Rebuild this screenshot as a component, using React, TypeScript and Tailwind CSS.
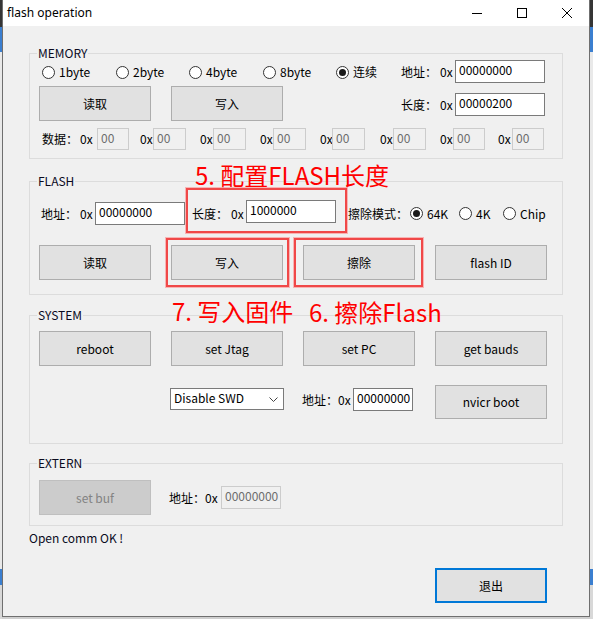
import React from "react";

type BtnProps = { children: React.ReactNode; className?: string; disabled?: boolean };
const Btn = ({ children, className = "", disabled = false }: BtnProps) => (
  <div
    className={`flex items-center justify-center border text-[12px] leading-[16px] ${
      disabled ? "bg-[#cccccc] border-[#bfbfbf] text-[#838383]" : "bg-[#e1e1e1] border-[#adadad] text-black"
    } ${className}`}
  >
    {children}
  </div>
);

type RadioProps = { label: string; checked?: boolean; className?: string };
const Radio = ({ label, checked = false, className = "" }: RadioProps) => (
  <div className={`flex items-center ${className}`}>
    <span className="w-[13px] h-[13px] rounded-full border border-[#333333] bg-white flex items-center justify-center shrink-0">
      {checked && <span className="w-[7px] h-[7px] rounded-full bg-[#1a1a1a]" />}
    </span>
    <span className="ml-[4px] leading-[16px]">{label}</span>
  </div>
);

type BoxProps = { children: React.ReactNode; className?: string };
const Input = ({ children, className = "" }: BoxProps) => (
  <div className={`flex items-center pl-[3px] pb-[3px] border border-[#7a7a7a] bg-white text-black leading-[16px] ${className}`}>
    {children}
  </div>
);
const DisInput = ({ children, className = "" }: BoxProps) => (
  <div className={`flex items-center pl-[3px] pb-[3px] border border-[#cccccc] bg-[#f0f0f0] text-[#6d6d6d] leading-[16px] ${className}`}>
    {children}
  </div>
);

type GroupProps = { title: string; className?: string; children: React.ReactNode };
const Group = ({ title, className = "", children }: GroupProps) => (
  <div className={`relative ml-[26px] w-[534px] border border-[#dcdcdc] shrink-0 ${className}`}>
    <span className="absolute left-[7px] top-[-9px] h-[16px] leading-[16px] px-[1px] bg-[#f0f0f0] text-[12px] text-[#0a0a1e]">
      {title}
    </span>
    {children}
  </div>
);

const dataCells = [
  { ml: "ml-0", lw: "w-[17px]", iw: "w-[32px]" },
  { ml: "ml-[11px]", lw: "w-[13px]", iw: "w-[33px]" },
  { ml: "ml-[14px]", lw: "w-[13px]", iw: "w-[33px]" },
  { ml: "ml-[14px]", lw: "w-[13px]", iw: "w-[33px]" },
  { ml: "ml-[14px]", lw: "w-[12px]", iw: "w-[33px]" },
  { ml: "ml-[15px]", lw: "w-[13px]", iw: "w-[33px]" },
  { ml: "ml-[14px]", lw: "w-[13px]", iw: "w-[32px]" },
  { ml: "ml-[13px]", lw: "w-[14px]", iw: "w-[32px]" },
];

const Strip = ({ className = "" }: { className?: string }) => (
  <div className={`flex flex-col h-[619px] shrink-0 ${className}`}>
    <div className="h-[27px] bg-[#353535]" />
    <div className="h-[25px] bg-[#3b7fd0]" />
    <div className="flex-1 bg-[#e9e9e9]" />
    <div className="h-[16px] bg-[#3b7fd0]" />
    <div className="h-[34px] bg-[#d8d8d8]" />
  </div>
);

export default function App() {
  return (
    <div className="w-[593px] h-[619px] flex bg-[#cfcfcf] overflow-hidden font-['Noto_Sans_CJK_SC',sans-serif] text-[12px] text-black">
      <Strip className="w-[2px]" />
      <div className="relative w-[588px] h-[617px] shrink-0 flex flex-col border-x border-b border-[#6f6f6f] bg-[#f0f0f0]">
        {/* title bar */}
        <div className="h-[26px] bg-white flex items-center shrink-0">
          <span className="ml-[4px] font-['Noto_Sans',sans-serif] text-[12px] leading-[16px] text-black">flash operation</span>
          <div className="ml-auto flex h-full">
            <div className="w-[45px] h-full flex items-center justify-center">
              <svg width="10" height="10" viewBox="0 0 10 10">
                <line x1="0" y1="5.5" x2="10" y2="5.5" stroke="#000" strokeWidth="1" />
              </svg>
            </div>
            <div className="w-[45px] h-full flex items-center justify-center">
              <svg width="10" height="10" viewBox="0 0 10 10">
                <rect x="0.5" y="0.5" width="9" height="9" fill="none" stroke="#000" strokeWidth="1" />
              </svg>
            </div>
            <div className="w-[45px] h-full flex items-center justify-center">
              <svg width="10" height="10" viewBox="0 0 10 10">
                <line x1="0" y1="0" x2="10" y2="10" stroke="#000" strokeWidth="1" />
                <line x1="10" y1="0" x2="0" y2="10" stroke="#000" strokeWidth="1" />
              </svg>
            </div>
          </div>
        </div>

        {/* MEMORY */}
        <Group title="MEMORY" className="mt-[27px] h-[106px]">
          <div className="flex">
            <div className="w-[371px]">
              <div className="mt-[6px] h-[24px] flex items-center pl-[12px]">
                <Radio label="1byte" className="w-[74px]" />
                <Radio label="2byte" className="w-[73px]" />
                <Radio label="4byte" className="w-[74px]" />
                <Radio label="8byte" className="w-[73px]" />
                <Radio label="连续" checked />
              </div>
              <div className="mt-[2px] flex pl-[9px] gap-[20px]">
                <Btn className="w-[112px] h-[35px]">读取</Btn>
                <Btn className="w-[112px] h-[35px]">写入</Btn>
              </div>
            </div>
            <div>
              <div className="mt-[6px] h-[23px] flex items-center">
                <span className="w-[39px]">地址：</span>
                <span className="w-[15px]">0x</span>
                <Input className="w-[90px] h-[23px]">00000000</Input>
              </div>
              <div className="mt-[10px] h-[23px] flex items-center">
                <span className="w-[39px]">长度：</span>
                <span className="w-[15px]">0x</span>
                <Input className="w-[90px] h-[23px]">00000200</Input>
              </div>
            </div>
          </div>
          <div className="mt-[7px] h-[22px] flex items-center pl-[12px]">
            <span className="w-[38px]">数据：</span>
            {dataCells.map((c, i) => (
              <div key={i} className={`flex items-center ${c.ml}`}>
                <span className={c.lw}>0x</span>
                <DisInput className={`${c.iw} h-[22px]`}>00</DisInput>
              </div>
            ))}
          </div>
        </Group>

        {/* FLASH */}
        <Group title="FLASH" className="mt-[22px] h-[114px]">
          <div className="mt-[20px] h-[23px] flex items-center pl-[11px]">
            <span className="w-[39px]">地址：</span>
            <span className="w-[15px]">0x</span>
            <Input className="w-[90px] h-[23px]">00000000</Input>
            <span className="ml-[7px] w-[39px]">长度：</span>
            <span className="w-[15px]">0x</span>
            <Input className="w-[90px] h-[23px] mb-[4px]">1000000</Input>
            <span className="ml-[12px] w-[62px]">擦除模式：</span>
            <Radio label="64K" checked className="w-[49px]" />
            <Radio label="4K" className="w-[44px]" />
            <Radio label="Chip" />
          </div>
          <div className="mt-[20px] flex pl-[9px] gap-[20px]">
            <Btn className="w-[112px] h-[35px]">读取</Btn>
            <Btn className="w-[112px] h-[35px]">写入</Btn>
            <Btn className="w-[112px] h-[35px]">擦除</Btn>
            <Btn className="w-[112px] h-[35px]">flash ID</Btn>
          </div>
        </Group>

        {/* SYSTEM */}
        <Group title="SYSTEM" className="mt-[20px] h-[129px]">
          <div className="mt-[15px] flex pl-[9px] gap-[20px]">
            <Btn className="w-[112px] h-[35px]">reboot</Btn>
            <Btn className="w-[112px] h-[35px]">set Jtag</Btn>
            <Btn className="w-[112px] h-[35px]">set PC</Btn>
            <Btn className="w-[112px] h-[35px]">get bauds</Btn>
          </div>
          <div className="mt-[19px] flex items-start">
            <div className="ml-[140px] mt-[3px] w-[114px] h-[22px] border border-[#7a7a7a] bg-white flex items-center pl-[3px] pb-[2px] leading-[16px]">
              <span>Disable SWD</span>
              <svg className="ml-auto mr-[5px] mt-[2px]" width="9" height="5" viewBox="0 0 9 5">
                <polyline points="0.5,0.5 4.5,4.5 8.5,0.5" fill="none" stroke="#444" strokeWidth="1" />
              </svg>
            </div>
            <div className="ml-[18px] mt-[3px] h-[23px] flex items-center">
              <span className="w-[36px]">地址：</span>
              <span className="w-[15px]">0x</span>
              <Input className="w-[60px] h-[23px]">00000000</Input>
            </div>
            <Btn className="ml-[22px] w-[112px] h-[34px]">nvicr boot</Btn>
          </div>
        </Group>

        {/* EXTERN */}
        <Group title="EXTERN" className="mt-[19px] h-[63px]">
          <div className="mt-[16px] flex items-center pl-[9px]">
            <Btn disabled className="w-[112px] h-[35px]">set buf</Btn>
            <span className="ml-[18px] w-[36px]">地址：</span>
            <span className="w-[16px]">0x</span>
            <DisInput className="w-[60px] h-[23px]">00000000</DisInput>
          </div>
        </Group>

        <div className="ml-[26px] mt-[4px] h-[16px] leading-[16px] text-[12px] text-[#0a0a1e]">Open comm OK !</div>

        <div className="ml-[432px] mt-[22px] w-[112px] h-[35px] border-2 border-[#0078d7] bg-[#e1e1e1] flex items-center justify-center leading-[16px]">
          退出
        </div>

        {/* annotations */}
        <div className="absolute left-[183px] top-[188px] w-[161px] h-[45px] border-2 border-[#f04848] shadow-[0_0_0_1px_#f8b4b4]" />
        <div className="absolute left-[163px] top-[238px] w-[123px] h-[49px] border-2 border-[#f04848] shadow-[0_0_0_1px_#f8b4b4]" />
        <div className="absolute left-[291px] top-[238px] w-[129px] h-[49px] border-2 border-[#f04848] shadow-[0_0_0_1px_#f8b4b4]" />
        <div className="absolute left-[192px] top-[163px] h-[24px] leading-[24px] text-[24px] text-[#ff0000] whitespace-nowrap">
          5. 配置FLASH长度
        </div>
        <div className="absolute left-[169px] top-[299px] h-[24px] leading-[24px] text-[24px] text-[#ff0000] whitespace-nowrap">
          7. 写入固件
        </div>
        <div className="absolute left-[306px] top-[300px] h-[24px] leading-[24px] text-[24px] text-[#ff0000] whitespace-nowrap">
          6. 擦除Flash
        </div>
      </div>
      <Strip className="w-[3px]" />
    </div>
  );
}
